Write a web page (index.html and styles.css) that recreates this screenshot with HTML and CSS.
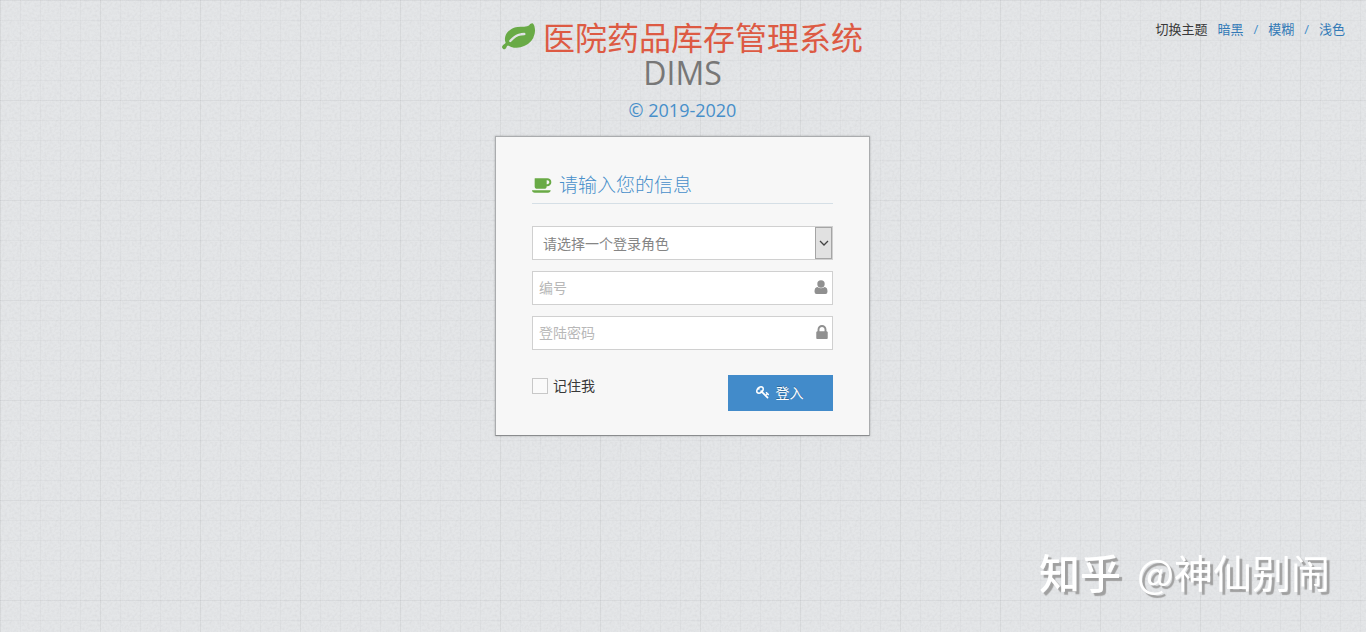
FILE: index.html
```html
<!DOCTYPE html>
<html lang="zh-CN">
<head>
    <meta charset="UTF-8">
    <meta name="viewport" content="width=device-width, initial-scale=1.0">
    <title>医院药品库存管理系统</title>
    <link rel="stylesheet" href="styles.css">
</head>
<body>
    <div class="page">
        <main class="login">
            <header class="brand">
                <h1>
                    <span class="brand-name">
                        <svg class="icon-leaf" viewBox="0 0 1792 1792" aria-hidden="true"><path d="M1280 704q0-26-19-45t-45-19q-172 0-318 49.5t-259.5 134-235.5 219.5q-19 21-19 45 0 26 19 45t45 19q24 0 45-19 27-24 74-71t67-66q137-124 268.5-176t313.5-52q26 0 45-19t19-45zm512-198q0 95-20 193-46 224-184.5 383t-357.5 268q-214 108-438 108-148 0-286-47-15-5-88-42t-96-37q-16 0-39.5 32t-45 70-52.5 70-60 32q-43 0-63.5-17.5t-45.5-59.5q-2-4-6-11t-5.5-10-3-9.5-1.5-13.5q0-35 31-73.5t68-65.5 68-56 31-48q0-4-14-38t-16-44q-9-51-9-104 0-115 43.5-220t119-184.5 170.5-139 204-95.5q55-18 145-25.5t179.5-9 178.5-6 163.5-24 113.5-56.5l29.5-29.5 29.5-28 27-20 36.5-16 43.5-4.5q39 0 70.5 46t47.5 112 24 124 8 96z"/></svg>
                        <span>医院药品库存管理系统</span>
                    </span>
                    <span class="brand-short">DIMS</span>
                </h1>
                <p class="copyright">© 2019-2020</p>
            </header>

            <form class="login-box">
                <h2 class="login-title">
                    <svg class="icon-coffee" viewBox="0 0 1920 1792" aria-hidden="true"><path d="M1664 576q0-80-56-136t-136-56h-64v384h64q80 0 136-56t56-136zm-1664 768h1792q0 106-75 181t-181 75h-1280q-106 0-181-75t-75-181zm1856-768q0 159-112.5 271.5t-271.5 112.5h-64v32q0 92-66 158t-158 66h-704q-92 0-158-66t-66-158v-736q0-26 19-45t45-19h1152q159 0 271.5 112.5t112.5 271.5z"/></svg>
                    <span>请输入您的信息</span>
                </h2>

                <div class="field">
                    <select class="control control-select" aria-label="登录角色">
                        <option>请选择一个登录角色</option>
                    </select>
                    <span class="select-arrow">
                        <svg viewBox="0 0 10 10" aria-hidden="true"><path d="M1 3l4 4 4-4"/></svg>
                    </span>
                </div>

                <div class="field">
                    <input class="control" type="text" placeholder="编号" aria-label="编号">
                    <svg class="field-icon" viewBox="0 0 14 14" aria-hidden="true"><circle cx="7" cy="4" r="3.700"/><path d="M3.400 7Q7 9.400 10.600 7Q13.500 7.300 13.500 11.500Q13.500 14 11.500 14H2.500Q.5 14 .5 11.500Q.5 7.300 3.400 7z"/></svg>
                </div>

                <div class="field">
                    <input class="control" type="password" placeholder="登陆密码" aria-label="登陆密码">
                    <svg class="field-icon field-icon-lock" viewBox="320 128 1152 1408" aria-hidden="true"><path d="M640 768h512v-192q0-106-75-181t-181-75-181 75-75 181v192zm832 96v576q0 40-28 68t-68 28h-960q-40 0-68-28t-28-68v-576q0-40 28-68t68-28h32v-192q0-184 132-316t316-132 316 132 132 316v192h32q40 0 68 28t28 68z"/></svg>
                </div>

                <div class="actions">
                    <label class="remember">
                        <input type="checkbox">
                        <span>记住我</span>
                    </label>
                    <button class="btn" type="submit">
                        <svg viewBox="0 0 1792 1792" aria-hidden="true"><path d="M832 512q0-80-56-136t-136-56-136 56-56 136q0 42 19 83-41-19-83-19-80 0-136 56t-56 136 56 136 136 56 136-56 56-136q0-42-19-83 41 19 83 19 80 0 136-56t56-136zm851 704q0 17-49 66t-66 49q-9 0-28.5-16t-36.5-33-38.5-40-24.5-26l-96 96 220 220q28 28 28 68 0 42-39 81t-81 39q-40 0-68-28l-671-671q-176 131-365 131-163 0-265.5-102.5t-102.5-265.5q0-160 95-313t248-248 313-95q163 0 265.5 102.5t102.5 265.5q0 189-131 365l355 355 96-96q-3-3-26-24.5t-40-38.5-33-36.5-16-28.5q0-17 49-66t66-49q13 0 23 10 6 6 46 44.5t82 79.5 86.5 86 73 78 28.5 41z"/></svg>
                        <span>登入</span>
                    </button>
                </div>
            </form>
        </main>

        <nav class="themes">
            <span class="themes-label">切换主题</span>
            <a href="#dark">暗黑</a>
            <span class="slash">/</span>
            <a href="#blur">模糊</a>
            <span class="slash">/</span>
            <a href="#light">浅色</a>
        </nav>
    </div>

    <div class="watermark">
        <span class="watermark-logo">知乎</span>
        <span>@神仙别闹</span>
    </div>
</body>
</html>
```

FILE: styles.css
```css
* {
    margin: 0;
    padding: 0;
    box-sizing: border-box;
}

body {
    min-height: 100vh;
    font-family: "Open Sans", "Noto Sans CJK SC", sans-serif;
    font-size: 13px;
    color: #393939;
    background-color: #e4e6e8;
    /* paper grain, then the 100px and 20px grid lines */
    background-image:
        url("data:image/svg+xml,%3Csvg xmlns='http://www.w3.org/2000/svg' width='200' height='200'%3E%3Cfilter id='n' x='0' y='0' width='1' height='1'%3E%3CfeTurbulence type='fractalNoise' baseFrequency='.4' numOctaves='2' stitchTiles='stitch'/%3E%3CfeColorMatrix values='0 0 0 0 .5 0 0 0 0 .5 0 0 0 0 .52 .4 0 0 0 -.15'/%3E%3C/filter%3E%3Crect width='200' height='200' filter='url(%23n)'/%3E%3C/svg%3E"),
        linear-gradient(rgba(90, 95, 100, 0.04) 1px, transparent 1px),
        linear-gradient(90deg, rgba(90, 95, 100, 0.05) 1px, transparent 1px),
        linear-gradient(rgba(90, 95, 100, 0.04) 1px, transparent 1px),
        linear-gradient(90deg, rgba(90, 95, 100, 0.04) 1px, transparent 1px);
    background-size: 200px 200px, 100px 100px, 100px 100px, 20px 20px, 20px 20px;
}

a {
    color: #337ab7;
    text-decoration: none;
}

a:hover {
    text-decoration: underline;
}

.page {
    display: grid;
    grid-template-columns: 1fr minmax(0, 375px) 1fr;
    padding: 20px 21px 20px 20px;
}

.login {
    grid-column: 2;
}

/* Header */
.brand {
    text-align: center;
    margin-bottom: 13px;
}

.brand h1 {
    font-size: 32px;
    font-weight: 400;
    line-height: 35px;
}

.brand-name {
    display: flex;
    align-items: center;
    justify-content: center;
    gap: 8px;
    color: #dd5a43;
    white-space: nowrap;
}

.icon-leaf {
    width: 33px;
    height: 33px;
    fill: #69aa46;
}

.brand-short {
    display: block;
    color: #777;
}

.copyright {
    margin-top: 7px;
    font-size: 18px;
    line-height: 26px;
    color: #478fca;
}

/* Login form */
.login-box {
    padding: 36px 36px 24px;
    background: #f7f7f7;
    border: 1px solid #aaacae;
    border-bottom-color: #8a8c8e;
    box-shadow: 0 0 2px rgba(0, 0, 0, 0.25);
}

.login-title {
    display: flex;
    align-items: center;
    gap: 7px;
    padding-bottom: 6px;
    margin-bottom: 22px;
    border-bottom: 1px solid #d5dfe6;
    font-size: 19px;
    font-weight: 300;
    line-height: 24px;
    color: #478fca;
}

.icon-coffee {
    width: 20px;
    height: 19px;
    fill: #69aa46;
}

.field {
    position: relative;
    margin-bottom: 11px;
}

.control {
    display: block;
    width: 100%;
    height: 34px;
    padding: 0 24px 2px 6px;
    border: 1px solid #d0d0d0;
    border-radius: 0;
    background: #fff;
    font-family: inherit;
    font-size: 14px;
    color: #858585;
}

.control::placeholder {
    color: #b8b8b8;
}

.control:focus {
    outline: none;
    border-color: #f59942;
}

.control-select {
    appearance: none;
    padding-bottom: 0;
    padding-left: 10px;
}

.select-arrow {
    position: absolute;
    top: 1px;
    right: 1px;
    bottom: 1px;
    width: 17px;
    display: flex;
    align-items: center;
    justify-content: center;
    background: #e1e1e1;
    border: 1px solid #a5a5a5;
    pointer-events: none;
}

.select-arrow svg {
    width: 10px;
    height: 10px;
    fill: none;
    stroke: #444;
    stroke-width: 1.3;
}

.field-icon {
    position: absolute;
    top: 9px;
    right: 5px;
    width: 14px;
    height: 14px;
    fill: #909090;
}

.field-icon-lock {
    width: 12px;
}

.actions {
    display: flex;
    align-items: flex-start;
    justify-content: space-between;
    padding-top: 14px;
}

.remember {
    display: flex;
    align-items: center;
    gap: 5px;
    font-size: 14px;
    line-height: 22px;
}

.remember input {
    appearance: none;
    width: 16px;
    height: 16px;
    border: 1px solid #c8c8c8;
    background: #fafafa;
}

.remember input:checked {
    background: #428bca;
}

.btn {
    display: flex;
    align-items: center;
    justify-content: center;
    gap: 6px;
    width: 105px;
    height: 36px;
    padding: 0 2px 2px 0;
    border: none;
    background: #428bca;
    font-family: inherit;
    font-size: 14px;
    color: #fff;
    text-shadow: 0 -1px 0 rgba(0, 0, 0, 0.25);
    cursor: pointer;
}

.btn:hover {
    background: #1b6aaa;
}

.btn svg {
    width: 14px;
    height: 14px;
    fill: #fff;
}

/* Theme switcher */
.themes {
    grid-column: 3;
    justify-self: end;
    display: flex;
    align-self: start;
    gap: 10px;
    line-height: 18px;
    white-space: nowrap;
}

.slash {
    color: #478fca;
}

.watermark {
    position: fixed;
    right: 36px;
    bottom: 31px;
    display: flex;
    align-items: center;
    gap: 16px;
    font-family: "Noto Sans CJK SC", sans-serif;
    font-size: 39px;
    font-weight: 400;
    line-height: 60px;
    color: #fff;
    text-shadow: 3px 3px 1px #a0a0a0;
    pointer-events: none;
}

.watermark-logo {
    font-size: 41px;
    font-weight: 500;
}
```
